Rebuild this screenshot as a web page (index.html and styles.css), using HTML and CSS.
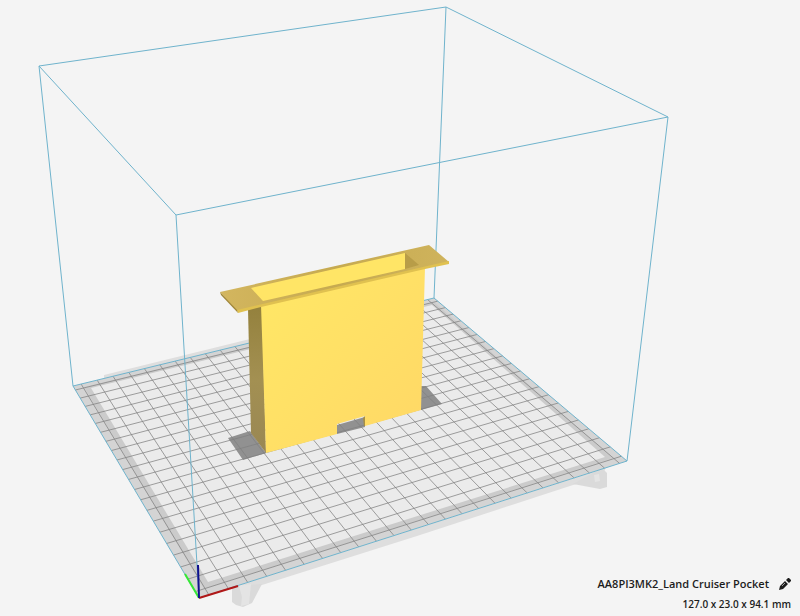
FILE: index.html
```html
<!DOCTYPE html>
<html lang="en">
<head>
<meta charset="utf-8">
<meta name="viewport" content="width=device-width, initial-scale=1">
<title>AA8PI3MK2_Land Cruiser Pocket</title>
<link rel="stylesheet" href="styles.css">
</head>
<body>
<main class="viewer">
  <svg class="scene" viewBox="0 0 800 616" preserveAspectRatio="xMidYMid meet" role="img" aria-label="Model on build plate">
    <defs>
      <linearGradient id="front" x1="0" y1="0" x2="1" y2="1">
        <stop offset="0" stop-color="#ffe866"/>
        <stop offset=".5" stop-color="#ffe066"/>
        <stop offset="1" stop-color="#ffd766"/>
      </linearGradient>
      <linearGradient id="side" x1="0" y1="0" x2="0" y2="1">
        <stop offset="0" stop-color="#94813d"/>
        <stop offset=".5" stop-color="#a39052"/>
        <stop offset="1" stop-color="#998754"/>
      </linearGradient>
      <linearGradient id="rim" x1="0" y1="0" x2="1" y2="0">
        <stop offset="0" stop-color="#d3b65f"/>
        <stop offset=".5" stop-color="#c6aa50"/>
        <stop offset="1" stop-color="#cfb35c"/>
      </linearGradient>
    </defs>

    <!-- printer base and feet -->
    <path class="base" d="M104 375 250 339 250 346 104 379ZM240 585 262 585 417 536 573 485 600 478 606 468Z"/>
    <path class="foot" d="M232 586 232 602 236 605 243 607 252 603 262 584Z"/>
    <path class="foot-face" d="M239 586 242 597 241 606 249 604 251 584Z"/>
    <path class="foot" d="M573 484 602 468 607 473 607 487 600 489Z"/>
    <path class="foot-face" d="M594 475 599 474 600 481 595 482Z"/>

    <!-- build plate -->
    <path class="plate" d="M199 598 627 461 434 298 73 386Z"/>
    <path class="plate-edge" d="M204 589 613 458 434 302 84 387Z"/>
    <path class="plate-top" d="M208 582 605 457 432 305 91 388Z"/>
    <path class="shadow" d="M228 438 250 431 266 453 243 460ZM421 386 426 386 442 404 421 410ZM337 425 365 417 365 427 337 434Z"/>
    <path class="grid" id="grid"/>

    <!-- build volume -->
    <path class="volume" d="M199 598 627 461 434 298 73 386ZM176 215 668 117 446 7 39 66ZM176 215 199 598M668 117 627 461M446 7 434 298M39 66 73 386"/>
    <path class="axis-y" d="M199 598 185 574"/>
    <path class="axis-x" d="M199 598 238 586"/>
    <path class="axis-z" d="M199 598 198 565"/>

    <!-- model -->
    <path fill="url(#side)" d="M248 309 262 306 266 453 251 433Z"/>
    <path fill="url(#front)" d="M261 305 425 267 421 410 365 426 365 416 337 424 337 434 266 453Z"/>
    <path fill="#a68f45" d="M363 418 365 416 365 426 364 426Z"/>
    <path fill="url(#rim)" d="M220 292 429 245 449 262 237 311Z"/>
    <path fill="#e0c150" d="M237 310 449 261 449 264 425 269 261 307 238 313Z"/>
    <path fill="#a08637" d="M220 292 237 310 238 313 221 295Z"/>
    <path fill="#ffe566" d="M251 288 405 253 405 269 263 301Z"/>
    <path fill="#b89d48" d="M405 253 419 265 405 269Z"/>
  </svg>

  <footer class="details">
    <div class="job">
      <h1 class="job-name">AA8PI3MK2_Land Cruiser Pocket</h1>
      <button class="edit" type="button" aria-label="Rename">
        <svg class="pencil" viewBox="0 0 12 12" aria-hidden="true">
          <path d="M7 2 9 0h1l2 2v1l-2 2ZM6 3l3 3-5 5-4 1 1-4Z"/>
          <path class="pencil-shine" d="M3 8 6 5"/>
        </svg>
      </button>
    </div>
    <p class="size">127.0 x 23.0 x 94.1 mm</p>
  </footer>
</main>
<script src="grid.js"></script>
</body>
</html>
```
FILE: styles.css
```css
* {
  box-sizing: border-box;
}

body {
  margin: 0;
  background: #f4f4f4;
  color: #1c1c1c;
  font-family: "Open Sans", "Noto Sans", sans-serif;
}

.viewer {
  display: grid;
  min-height: 100vh;
}

.scene,
.details {
  grid-area: 1 / 1;
}

.scene {
  display: block;
  width: 100%;
  height: 100vh;
}

.base { fill: #dedede; }
.foot { fill: #dadada; }
.foot-face { fill: #e4e4e4; }
.plate { fill: #d4d4d4; }
.plate-edge { fill: #cbcbcb; }
.plate-top { fill: #ebebeb; }
.shadow { fill: #919191; }

.grid,
.volume,
.axis-x,
.axis-y,
.axis-z {
  fill: none;
}

.grid {
  stroke: #808080;
  stroke-opacity: 0.75;
}

.volume {
  stroke: #6fb3cc;
}

.axis-x { stroke: #b01818; stroke-width: 2; }
.axis-y { stroke: #36e836; stroke-width: 2; }
.axis-z { stroke: #10108c; stroke-width: 2; }

.details {
  z-index: 1;
  align-self: end;
  justify-self: end;
  display: flex;
  flex-direction: column;
  align-items: flex-end;
  gap: 4px;
  padding: 0 9px 4px;
}

.job {
  display: flex;
  align-items: center;
  gap: 10px;
}

.job-name,
.size {
  margin: 0;
  line-height: 16px;
  font-weight: 600;
}

.job-name {
  font-size: 11px;
}

.size {
  font-size: 10px;
}

.edit {
  display: flex;
  padding: 0;
  border: 0;
  background: none;
  color: inherit;
  cursor: pointer;
}

.pencil {
  width: 12px;
  height: 12px;
  fill: currentColor;
}

.pencil-shine {
  fill: none;
  stroke: #f4f4f4;
  stroke-width: 0.6;
}
```
FILE: grid.js
```js
// Draws the 10 mm grid of a 250 x 210 mm plate in perspective.
const columns = 25;
const rows = 21;
const [a, b, c, d] = [[199, 598], [627, 461], [434, 298], [73, 386]];

// Projective map from the unit square to the corners a, b, c, d.
const dx1 = b[0] - c[0], dx2 = d[0] - c[0], sx = a[0] - b[0] + c[0] - d[0];
const dy1 = b[1] - c[1], dy2 = d[1] - c[1], sy = a[1] - b[1] + c[1] - d[1];
const det = dx1 * dy2 - dx2 * dy1;
const g = (sx * dy2 - dx2 * sy) / det;
const h = (dx1 * sy - sx * dy1) / det;

function project(u, v) {
  const w = 1 + g * u + h * v;
  return [0, 1].map((i) =>
    ((a[i] + (b[i] - a[i] + g * b[i]) * u + (d[i] - a[i] + h * d[i]) * v) / w).toFixed(2)
  ).join(" ");
}

const lines = [];
for (let i = 0.5; i < columns; i++) {
  lines.push(`M${project(i / columns, 0)}L${project(i / columns, 1)}`);
}
for (let j = 0.5; j < rows; j++) {
  lines.push(`M${project(0, j / rows)}L${project(1, j / rows)}`);
}
document.getElementById("grid").setAttribute("d", lines.join(""));
```
